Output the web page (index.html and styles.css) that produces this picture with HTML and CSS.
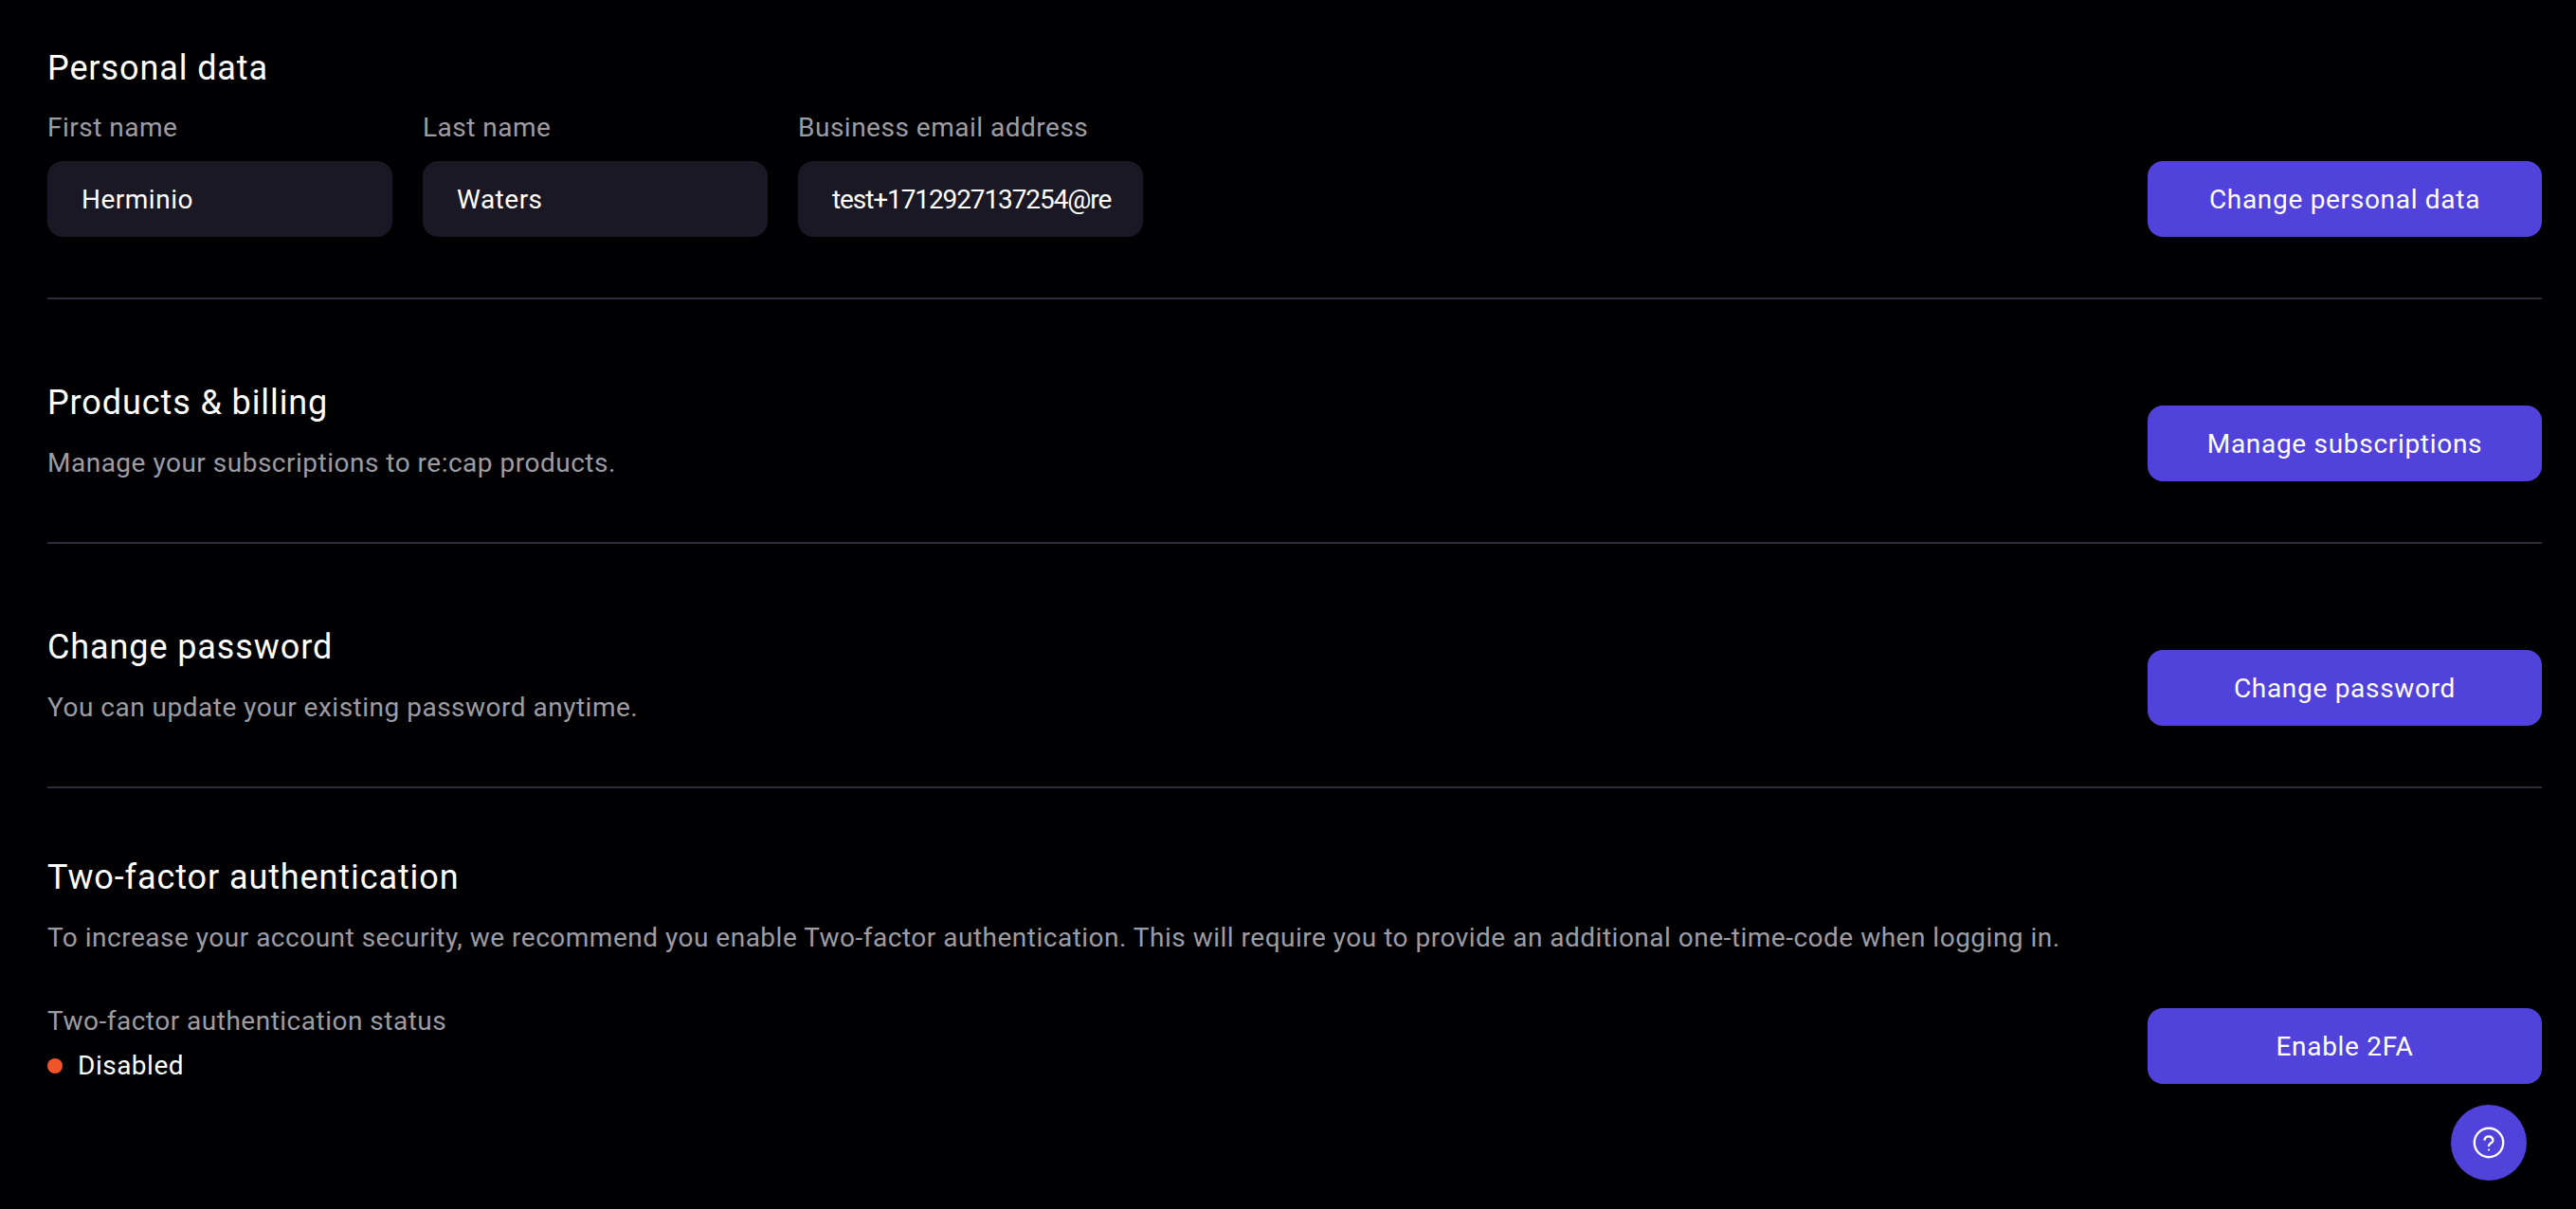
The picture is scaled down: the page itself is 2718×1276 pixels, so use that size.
FILE: index.html
```html
<!DOCTYPE html>
<html lang="en">
<head>
<meta charset="utf-8">
<title>Account settings</title>
<link rel="stylesheet" href="styles.css">
</head>
<body>
<main class="page">
  <section class="section section-personal">
    <h2 class="title">Personal data</h2>
    <div class="row row-fields">
      <div class="fields">
        <label class="field"><span class="label">First name</span><span class="input">Herminio</span></label>
        <label class="field"><span class="label">Last name</span><span class="input">Waters</span></label>
        <label class="field"><span class="label">Business email address</span><span class="input"><span class="clip">test+1712927137254@re</span></span></label>
      </div>
      <button class="btn">Change personal data</button>
    </div>
  </section>
  <section class="section">
    <div class="row">
      <div>
        <h2 class="title">Products &amp; billing</h2>
        <p class="desc">Manage your subscriptions to re:cap products.</p>
      </div>
      <button class="btn">Manage subscriptions</button>
    </div>
  </section>
  <section class="section">
    <div class="row">
      <div>
        <h2 class="title">Change password</h2>
        <p class="desc">You can update your existing password anytime.</p>
      </div>
      <button class="btn">Change password</button>
    </div>
  </section>
  <section class="section section-last">
    <h2 class="title">Two-factor authentication</h2>
    <p class="desc">To increase your account security, we recommend you enable Two-factor authentication. This will require you to provide an additional one-time-code when logging in.</p>
    <div class="row status-row">
      <div>
        <div class="label">Two-factor authentication status</div>
        <div class="status"><span class="dot"></span>Disabled</div>
      </div>
      <button class="btn">Enable 2FA</button>
    </div>
  </section>
</main>
<button class="help" aria-label="Help">
  <svg width="36" height="36" viewBox="0 0 36 36" fill="none" stroke="#fff" stroke-width="2.4" stroke-linecap="round">
    <circle cx="18" cy="18" r="15.2"/>
    <path d="M13.6 14.6a4.5 4.5 0 0 1 8.8 1.1c0 2.6-4.2 3-4.4 5.4"/>
    <circle cx="18" cy="25.6" r="1.1" fill="#fff" stroke="none"/>
  </svg>
</button>
</body>
</html>
```
FILE: styles.css
```css
* { box-sizing: border-box; }
html, body { margin: 0; height: 100%; }
body {
  background: #010103;
  color: #fff;
  font-family: "Roboto", "Inter", sans-serif;
  letter-spacing: 0.5px;
  overflow: hidden;
}
.page { padding: 0 36px 0 50px; }
.section {
  height: 258px;
  padding-top: 87px;
  border-bottom: 2px solid #2f2d3b;
}
.section-personal { height: 316px; padding-top: 50px; }
.section-last { height: auto; border-bottom: 0; padding-top: 72px; }
.title {
  margin: 0;
  font-size: 36px;
  font-weight: 400;
  line-height: 44px;
  letter-spacing: 0.9px;
}
.row {
  display: flex;
  justify-content: space-between;
  align-items: flex-end;
}
.row-fields { margin-top: 22px; }
.fields { display: flex; gap: 32px; }
.field { display: flex; flex-direction: column; gap: 16px; width: 364px; }
.label, .desc {
  font-size: 28px;
  line-height: 38px;
  color: #9d9ca3;
}
.desc { margin: 23px 0 0; }
.input {
  display: block;
  height: 80px;
  padding: 1px 36px 0;
  border-radius: 16px;
  background: #1a1825;
  font-size: 28px;
  line-height: 80px;
  color: #fff;
}
.clip { display: block; white-space: nowrap; letter-spacing: -1.1px; }
.btn {
  width: 416px;
  height: 80px;
  border: 0;
  border-radius: 16px;
  background: #5042db;
  color: #fff;
  font: 400 28px "Roboto", "Inter", sans-serif;
  letter-spacing: 0.7px;
}
.status-row { margin-top: 50px; }
.status {
  display: flex;
  align-items: center;
  gap: 16px;
  margin-top: 9px;
  font-size: 28px;
  line-height: 38px;
}
.dot {
  width: 16px;
  height: 16px;
  border-radius: 50%;
  background: #f0542b;
}
.help {
  position: fixed;
  right: 52px;
  bottom: 30px;
  width: 80px;
  height: 80px;
  padding: 0;
  border: 0;
  border-radius: 50%;
  background: #5042db;
  display: flex;
  align-items: center;
  justify-content: center;
}
```
